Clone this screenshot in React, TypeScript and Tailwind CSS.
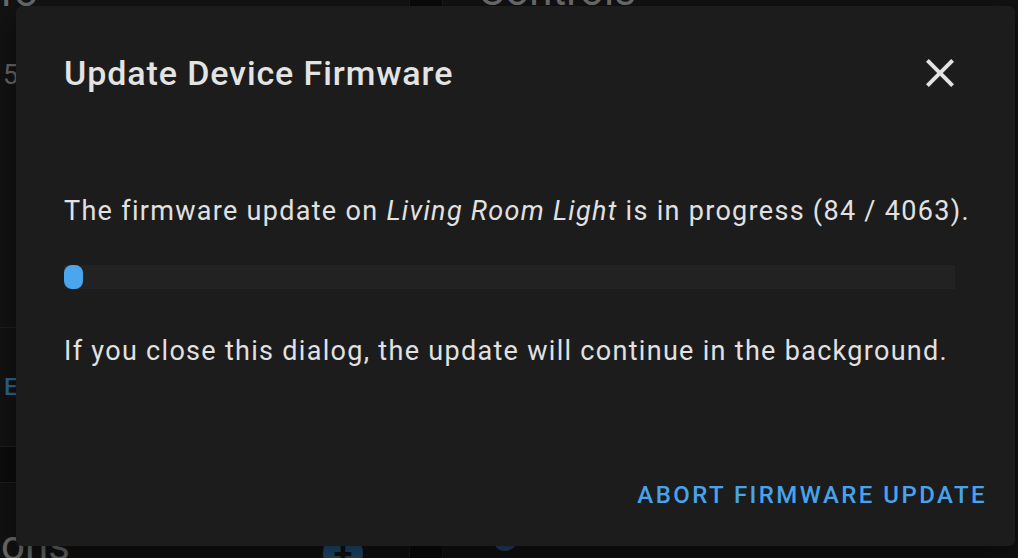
import React from "react";

const font = { fontFamily: "Roboto, 'Noto Sans', 'Liberation Sans', sans-serif" };

function CloseIcon() {
  return (
    <svg viewBox="0 0 24 24" className="w-[48px] h-[48px]" fill="#e3e3e3">
      <path d="M19,6.41L17.59,5L12,10.59L6.41,5L5,6.41L10.59,12L5,17.59L6.41,19L12,13.41L17.59,19L19,17.59L13.41,12L19,6.41Z" />
    </svg>
  );
}

export default function App() {
  return (
    <div className="relative w-[1018px] h-[558px] overflow-hidden bg-[#111111]" style={font}>
      {/* background page */}
      <div className="flex w-full h-full">
        <div className="w-[409px] flex flex-col shrink-0">
          <div className="h-[447px] shrink-0 bg-[#131313] border-b border-[#1f1f1f] flex flex-col overflow-hidden">
            <div className="h-[328px] shrink-0 border-b border-[#1f1f1f] flex flex-col">
              <div className="mt-[-29px] ml-[-35px] text-[42px] leading-[42px] text-[#6c6c6c] whitespace-nowrap">Info</div>
              <div className="mt-[46px] ml-[3px] text-[27px] leading-[32px] text-[#6a6a6a]">5</div>
            </div>
            <div className="mt-[47px] ml-[4px] text-[24px] leading-[24px] font-medium text-[#2d6897] tracking-[2px]">E</div>
          </div>
          <div className="h-[35px] shrink-0 bg-[#0c0c0c]" />
          <div className="flex-1 min-h-0 overflow-hidden bg-[#121212] border-t border-[#1f1f1f] flex justify-between">
            <div className="mt-[42px] ml-[1px] text-[42px] leading-[42px] text-[#6c6c6c]">ons</div>
            <div className="mt-[50px] mr-[46px] w-[40px] h-[40px] rounded-full bg-[#1f4e76] flex items-center justify-center shrink-0">
              <div className="text-[#111] text-[34px] font-bold leading-none">+</div>
            </div>
          </div>
        </div>
        <div className="w-[34px] shrink-0 bg-[#0a0a0a] border-x border-[#1a1a1a]" />
        <div className="flex-1 bg-[#121212] flex flex-col">
          <div className="mt-[-30px] ml-[35px] text-[42px] leading-[42px] text-[#717171]">Controls</div>
          <div className="mt-[515px] ml-[50px] w-[24px] h-[24px] rounded-full bg-[#23456a]" />
        </div>
      </div>

      {/* dialog */}
      <div className="absolute left-[16px] top-[6px] w-[999px] h-[540px] rounded-[6px] bg-[#1c1c1c] shadow-[0_10px_30px_rgba(0,0,0,0.5)] flex flex-col">
        <div className="mt-[43px] pl-[48px] pr-[51px] h-[48px] flex items-center justify-between">
          <div className="text-[34px] leading-[48px] font-medium text-[#e3e3e3] tracking-[0.9px]">Update Device Firmware</div>
          <CloseIcon />
        </div>
        <div className="mt-[98px] pl-[48px] text-[27px] leading-[32px] text-[#e1e1e1] tracking-[1.3px] whitespace-nowrap">
          The firmware update on <i>Living Room Light</i> is in progress (84 / 4063).
        </div>
        <div className="mt-[38px] ml-[48px] w-[891px] h-[24px] bg-[#222222]">
          <div className="h-full rounded-[8px] bg-[#4ba6ee]" style={{ width: `${Math.max((84 / 4063) * 891, 19)}px` }} />
        </div>
        <div className="mt-[46px] pl-[48px] text-[27px] leading-[32px] text-[#e1e1e1] tracking-[1.3px] whitespace-nowrap">
          If you close this dialog, the update will continue in the background.
        </div>
        <div className="mt-[104px] pr-[28px] h-[48px] flex items-center justify-end">
          <div className="text-[24px] leading-[48px] font-medium text-[#47a3ec] tracking-[2.45px] uppercase">Abort firmware update</div>
        </div>
      </div>
    </div>
  );
}
